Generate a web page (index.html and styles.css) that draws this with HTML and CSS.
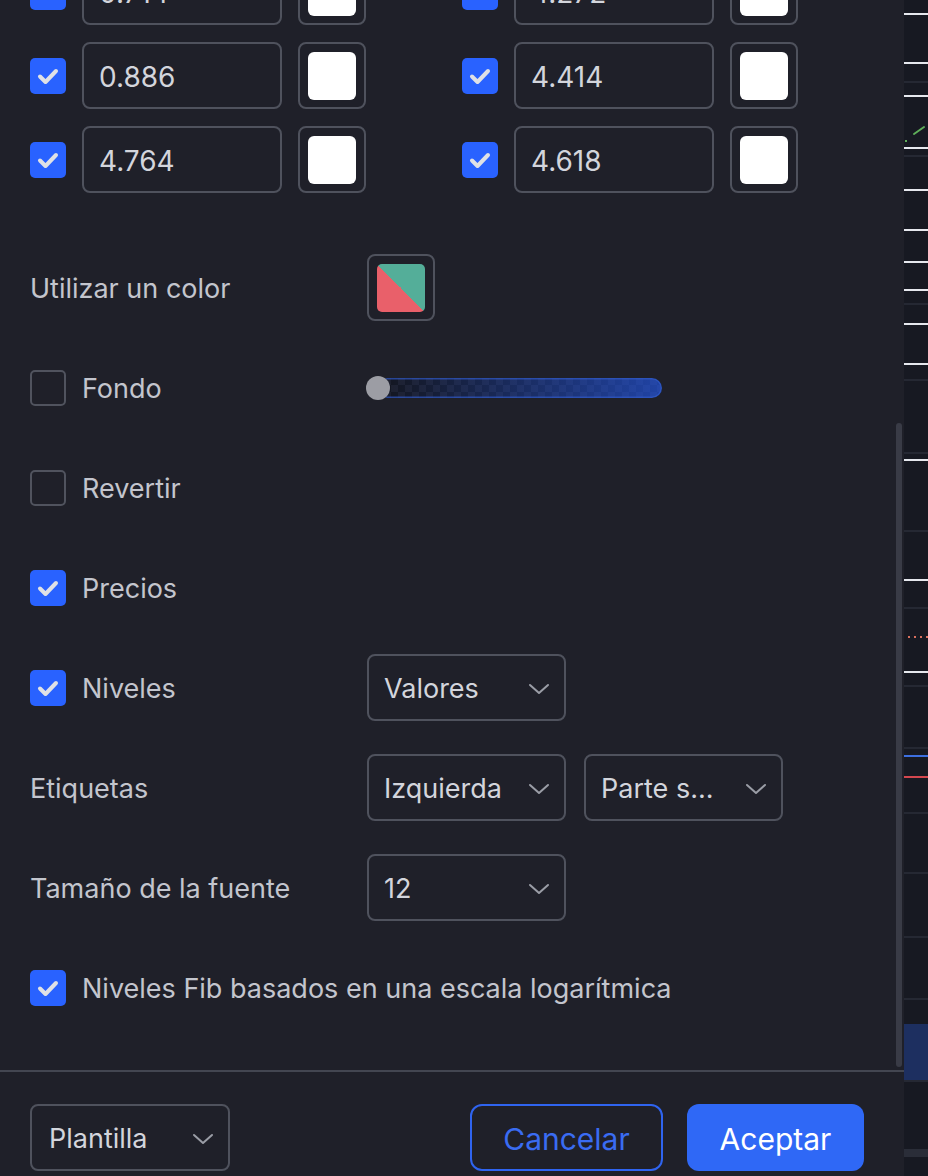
FILE: index.html
```html
<!DOCTYPE html>
<html lang="es">
<head>
<meta charset="utf-8">
<title>Ajustes</title>
<link rel="stylesheet" href="styles.css">
</head>
<body>
<div class="screen">
  <div class="dialog">
    <div class="content">
      <div class="levels">
        <div class="level"><span class="cb on"><svg viewBox="0 0 36 36"><path d="M10 18.5l5.5 5.5L26 13"/></svg></span><div class="field">0.714</div><div class="swatch"><span class="fill"></span></div></div>
        <div class="level"><span class="cb on"><svg viewBox="0 0 36 36"><path d="M10 18.5l5.5 5.5L26 13"/></svg></span><div class="field">4.272</div><div class="swatch"><span class="fill"></span></div></div>
        <div class="level"><span class="cb on"><svg viewBox="0 0 36 36"><path d="M10 18.5l5.5 5.5L26 13"/></svg></span><div class="field">0.886</div><div class="swatch"><span class="fill"></span></div></div>
        <div class="level"><span class="cb on"><svg viewBox="0 0 36 36"><path d="M10 18.5l5.5 5.5L26 13"/></svg></span><div class="field">4.414</div><div class="swatch"><span class="fill"></span></div></div>
        <div class="level"><span class="cb on"><svg viewBox="0 0 36 36"><path d="M10 18.5l5.5 5.5L26 13"/></svg></span><div class="field">4.764</div><div class="swatch"><span class="fill"></span></div></div>
        <div class="level"><span class="cb on"><svg viewBox="0 0 36 36"><path d="M10 18.5l5.5 5.5L26 13"/></svg></span><div class="field">4.618</div><div class="swatch"><span class="fill"></span></div></div>
      </div>

      <div class="settings">
        <div class="row">
          <div class="label-col"><span class="label">Utilizar un color</span></div>
          <div class="swatch"><span class="fill split"></span></div>
        </div>
        <div class="row">
          <div class="label-col"><span class="cb"></span><span class="label">Fondo</span></div>
          <div class="slider"><div class="track"></div><div class="thumb"></div></div>
        </div>
        <div class="row">
          <div class="label-col"><span class="cb"></span><span class="label">Revertir</span></div>
        </div>
        <div class="row">
          <div class="label-col"><span class="cb on"><svg viewBox="0 0 36 36"><path d="M10 18.5l5.5 5.5L26 13"/></svg></span><span class="label">Precios</span></div>
        </div>
        <div class="row">
          <div class="label-col"><span class="cb on"><svg viewBox="0 0 36 36"><path d="M10 18.5l5.5 5.5L26 13"/></svg></span><span class="label">Niveles</span></div>
          <div class="select"><span>Valores</span><svg class="chev" viewBox="0 0 22 12"><path d="M2 2l9 8 9-8"/></svg></div>
        </div>
        <div class="row">
          <div class="label-col"><span class="label">Etiquetas</span></div>
          <div class="controls">
            <div class="select"><span>Izquierda</span><svg class="chev" viewBox="0 0 22 12"><path d="M2 2l9 8 9-8"/></svg></div>
            <div class="select"><span>Parte s...</span><svg class="chev" viewBox="0 0 22 12"><path d="M2 2l9 8 9-8"/></svg></div>
          </div>
        </div>
        <div class="row">
          <div class="label-col"><span class="label">Tamaño de la fuente</span></div>
          <div class="select"><span>12</span><svg class="chev" viewBox="0 0 22 12"><path d="M2 2l9 8 9-8"/></svg></div>
        </div>
        <div class="row">
          <div class="label-col wide"><span class="cb on"><svg viewBox="0 0 36 36"><path d="M10 18.5l5.5 5.5L26 13"/></svg></span><span class="label">Niveles Fib basados en una escala logarítmica</span></div>
        </div>
      </div>

      <div class="scrollbar"></div>
    </div>

    <div class="footer">
      <div class="select"><span>Plantilla</span><svg class="chev" viewBox="0 0 22 12"><path d="M2 2l9 8 9-8"/></svg></div>
      <div class="actions">
        <button class="btn ghost">Cancelar</button>
        <button class="btn primary">Aceptar</button>
      </div>
    </div>
  </div>

  <svg class="chart" viewBox="904 0 24 1176" preserveAspectRatio="none">
    <rect x="904" y="0" width="24" height="1176" fill="#171922"/>
    <g fill="#252833">
      <rect x="904" y="81" width="24" height="2"/>
      <rect x="904" y="155" width="24" height="2"/>
      <rect x="904" y="303" width="24" height="2"/>
      <rect x="904" y="379" width="24" height="2"/>
      <rect x="904" y="452" width="24" height="2"/>
      <rect x="904" y="530" width="24" height="2"/>
      <rect x="904" y="607" width="24" height="2"/>
      <rect x="904" y="685" width="24" height="2"/>
      <rect x="904" y="747" width="24" height="2"/>
      <rect x="904" y="812" width="24" height="2"/>
      <rect x="904" y="872" width="24" height="2"/>
      <rect x="904" y="936" width="24" height="2"/>
      <rect x="904" y="998" width="24" height="2"/>
    </g>
    <g fill="#e6e8ee">
      <rect x="904" y="13" width="24" height="2"/>
      <rect x="904" y="62" width="24" height="2"/>
      <rect x="904" y="95" width="24" height="2"/>
      <rect x="904" y="147" width="24" height="2"/>
      <rect x="904" y="189" width="24" height="2"/>
      <rect x="904" y="229" width="24" height="2"/>
      <rect x="904" y="261" width="24" height="2"/>
      <rect x="904" y="289" width="24" height="2"/>
      <rect x="904" y="323" width="24" height="2"/>
      <rect x="904" y="363" width="24" height="2"/>
      <rect x="904" y="459" width="24" height="2"/>
      <rect x="904" y="579" width="24" height="2"/>
      <rect x="904" y="671" width="24" height="2"/>
    </g>
    <path d="M914 134l10-7" stroke="#5fae5a" stroke-width="2" stroke-linecap="round"/>
    <rect x="905" y="140" width="2" height="2" fill="#5fae5a"/>
    <g fill="#d9705e">
      <rect x="908" y="636" width="2" height="2"/>
      <rect x="914" y="636" width="2" height="2"/>
      <rect x="920" y="636" width="2" height="2"/>
      <rect x="926" y="636" width="2" height="2"/>
    </g>
    <rect x="904" y="755" width="24" height="2" fill="#3d6fe0"/>
    <rect x="904" y="776" width="24" height="2" fill="#d4474f"/>
    <rect x="904" y="1024" width="24" height="56" fill="#1d2f60"/>
    <rect x="904" y="1080" width="24" height="2" fill="#252833"/>
    <rect x="904" y="1149" width="24" height="8" fill="#2a2d38"/>
  </svg>
</div>
</body>
</html>
```

FILE: styles.css
```css
* { box-sizing: border-box; }

html, body {
  margin: 0;
  padding: 0;
  background: #171922;
}

body {
  font-family: Inter, "Noto Sans", "Liberation Sans", sans-serif;
  font-size: 27px;
  color: #c6c8d0;
}

.screen {
  display: flex;
  width: 928px;
  height: 1176px;
  overflow: hidden;
}

.dialog {
  width: 904px;
  flex: 0 0 904px;
  background: #1f2029;
  display: flex;
  flex-direction: column;
}

.content {
  position: relative;
  height: 1070px;
  flex: 0 0 1070px;
  overflow: hidden;
}

/* level grid */
.levels {
  display: grid;
  grid-template-columns: 336px 336px;
  column-gap: 96px;
  row-gap: 17px;
  padding-left: 30px;
  margin-top: -42px;
}

.level {
  display: flex;
  align-items: center;
  gap: 16px;
  height: 67px;
}

.cb {
  width: 36px;
  height: 36px;
  flex: 0 0 36px;
  border: 2px solid #50535e;
  border-radius: 5px;
  display: flex;
  align-items: center;
  justify-content: center;
}

.cb.on {
  border: none;
  background: #2962ff;
}

.cb svg {
  width: 36px;
  height: 36px;
}

.cb svg path {
  fill: none;
  stroke: #dfe1e6;
  stroke-width: 4;
  stroke-linecap: round;
  stroke-linejoin: round;
}

.field {
  width: 200px;
  height: 67px;
  border: 2px solid #4f525d;
  border-radius: 8px;
  padding: 2px 0 0 15px;
  display: flex;
  align-items: center;
  font-size: 28px;
  color: #d3d5dc;
}

.swatch {
  width: 68px;
  height: 67px;
  flex: 0 0 68px;
  border: 2px solid #4f525d;
  border-radius: 8px;
  display: flex;
  align-items: center;
  justify-content: center;
}

.swatch .fill {
  width: 48px;
  height: 48px;
  border-radius: 6px;
  background: #ffffff;
}

.swatch .fill.split {
  border-radius: 5px;
  background: linear-gradient(to top right, #e9606a 50%, #54ae99 50%);
}

/* settings */
.settings {
  margin-top: 61px;
  padding-left: 30px;
  display: flex;
  flex-direction: column;
  gap: 33px;
}

.row {
  height: 67px;
  display: flex;
  align-items: center;
}

.label-col {
  width: 337px;
  flex: 0 0 337px;
  display: flex;
  align-items: center;
  gap: 16px;
}

.label-col.wide {
  width: auto;
  flex: 1 1 auto;
}

.label {
  color: #c3c5cd;
  white-space: nowrap;
  padding-top: 2px;
}

.controls {
  display: flex;
  gap: 18px;
}

.select {
  width: 199px;
  height: 67px;
  border: 2px solid #4f525d;
  border-radius: 8px;
  padding: 2px 14px 0 15px;
  display: flex;
  align-items: center;
  justify-content: space-between;
  color: #d3d5dc;
}

.chev {
  width: 22px;
  height: 12px;
}

.chev path {
  fill: none;
  stroke: #9a9da6;
  stroke-width: 2;
  stroke-linecap: round;
  stroke-linejoin: round;
}

/* slider */
.slider {
  position: relative;
  width: 295px;
  height: 24px;
  display: flex;
  align-items: center;
}

.track {
  margin-left: 10px;
  flex: 1;
  height: 20px;
  border-radius: 10px;
  background:
    linear-gradient(to right, rgba(41, 98, 255, 0) 0%, rgba(41, 98, 255, 0.6) 100%),
    conic-gradient(#1d1f2a 0 25%, #13151d 0 50%, #1d1f2a 0 75%, #13151d 0) 0 0 / 14px 14px;
  box-shadow: inset 0 0 0 1.5px rgba(48, 90, 200, 0.7);
}

.thumb {
  position: absolute;
  left: -1px;
  top: 0;
  width: 24px;
  height: 24px;
  border-radius: 50%;
  background: #9c9da4;
}

.scrollbar {
  position: absolute;
  left: 896px;
  top: 423px;
  width: 6px;
  height: 644px;
  border-radius: 3px;
  background: #393b46;
}

/* footer */
.footer {
  flex: 1;
  border-top: 2px solid #434651;
  padding: 32px 40px 0 30px;
  display: flex;
  align-items: flex-start;
  justify-content: space-between;
}

.footer .select {
  width: 200px;
  padding-left: 17px;
}

.actions {
  display: flex;
  gap: 24px;
}

.btn {
  height: 67px;
  border-radius: 12px;
  font-family: Inter, "Noto Sans", "Liberation Sans", sans-serif;
  font-size: 30px;
  padding: 2px 0 0;
  cursor: pointer;
}

.btn.ghost {
  width: 193px;
  background: transparent;
  border: 2px solid #2f64f0;
  color: #3a6cf2;
}

.btn.primary {
  width: 177px;
  background: #2f68f6;
  border: none;
  color: #ffffff;
}

.chart {
  width: 24px;
  height: 1176px;
  flex: 0 0 24px;
  display: block;
}
```
